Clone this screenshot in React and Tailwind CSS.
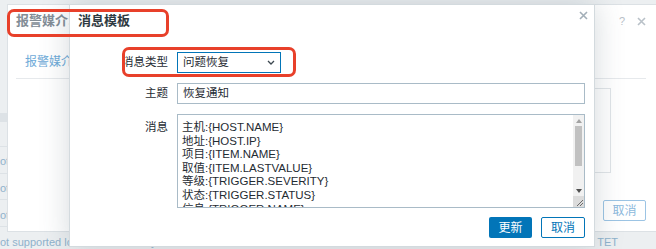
import React from 'react';

const messageLines = [
  '主机:{HOST.NAME}',
  '地址:{HOST.IP}',
  '项目:{ITEM.NAME}',
  '取值:{ITEM.LASTVALUE}',
  '等级:{TRIGGER.SEVERITY}',
  '状态:{TRIGGER.STATUS}',
  '信息:{TRIGGER.NAME}',
];

const CloseIcon = ({ className }) => (
  <svg width="9" height="9" viewBox="0 0 9 9" className={className}>
    <path d="M1 1L8 8M8 1L1 8" stroke="currentColor" strokeWidth="1.6" />
  </svg>
);

const Chevron = () => (
  <svg width="8" height="5" viewBox="0 0 8 5" className="text-[#3d4850]">
    <path d="M1 1L4 4L7 1" stroke="currentColor" strokeWidth="1.3" fill="none" />
  </svg>
);

const Scrollbar = () => (
  <div className="w-[11px] bg-[#f1f1f1] flex flex-col">
    <div className="h-[11px] flex items-center justify-center">
      <svg width="6" height="4" viewBox="0 0 6 4"><path d="M0 4L3 0L6 4Z" fill="#a3a3a3" /></svg>
    </div>
    <div className="h-[40px] mx-[2px] bg-[#c1c1c1]" />
    <div className="flex-1" />
    <div className="h-[11px] flex items-center justify-center">
      <svg width="6" height="4" viewBox="0 0 6 4"><path d="M0 0L6 0L3 4Z" fill="#505050" /></svg>
    </div>
    <div className="h-[11px] bg-[#dcdcdc] flex items-end justify-end">
      <svg width="9" height="9" viewBox="0 0 9 9">
        <path d="M2 8L8 2M5 8L8 5" stroke="#6b6b6b" strokeWidth="1" />
      </svg>
    </div>
  </div>
);

// page underneath both dialogs
const BackgroundPage = () => (
  <div className="w-[656px] h-[249px] bg-[#eceff1] flex flex-col pt-[113px] text-[11px] text-[#8fb2cc]">
    <div className="h-[10px] bg-[#dde2e6]" />
    <div className="h-[26px] border-b border-[#dde2e6]" />
    {[0, 1, 2].map((i) => (
      <div key={i} className="h-[28px] border-b border-[#dde2e6] flex items-center pt-[4px] leading-none">ot</div>
    ))}
    <div className="flex pt-[9px] leading-[13px] whitespace-nowrap">
      <span>ot supported low-level discovery rules and items were found on hosts</span>
      <span className="ml-auto mr-[38px]">TET</span>
    </div>
  </div>
);

const MediaDialog = () => (
  <div className="absolute left-[7px] top-[4px] w-[652px] h-[228px] bg-white border border-[#dce1e5] flex flex-col pl-[8px] pr-[12px] pt-[8px]">
    <div className="flex items-center justify-between h-[16px]">
      <h2 className="text-[13px] leading-[16px] font-bold text-[#838d96]">报警媒介:</h2>
      <div className="flex items-center gap-[12px] text-[#b9c1c8]">
        <span className="text-[11px] leading-none">?</span>
        <CloseIcon />
      </div>
    </div>
    <div className="h-[34px] mt-[16px] border-b border-[#e6e9ec] flex items-center pl-[9px] text-[12px] text-[#6eaad8]">
      报警媒介
    </div>
    <div className="flex justify-end mt-[9px]">
      <div className="w-[200px] h-[85px] border border-[#e1e5e8] mr-[35px]" />
    </div>
    <div className="flex justify-end mt-[27px]">
      <button className="w-[43px] h-[21px] border border-[#9cc4e4] rounded-[2px] text-[12px] text-[#8cb8dc] bg-white">取消</button>
    </div>
  </div>
);

const TemplateDialog = () => (
  <div className="absolute left-[69px] top-[4px] w-[526px] h-[243px] bg-white border border-[#d3dade] shadow-[0_0_28px_rgba(60,80,95,0.22)] flex flex-col pl-[10px] pr-[9px] pt-[8px]">
    <div className="flex items-start justify-between h-[16px]">
      <h2 className="text-[13px] leading-[16px] font-bold text-[#2f3a42] ml-[-2px]">消息模板</h2>
      <CloseIcon className="text-[#a3afb8] mt-[-2px] mr-[-3px]" />
    </div>

    <div className="grid grid-cols-[88px_1fr] gap-x-[9px] gap-y-[10px] mt-[23px] text-[11.5px] text-[#1f2c33]">
      <label className="text-right leading-[21px]">消息类型</label>
      <div className="w-[104px] h-[21px] border border-[#0275b8] flex items-center justify-between pl-[5px] pr-[5px]">
        <span>问题恢复</span>
        <Chevron />
      </div>

      <label className="text-right leading-[21px]">主题</label>
      <div className="h-[21px] border border-[#a9bbc7] flex items-center pl-[5px]">恢复通知</div>

      <label className="text-right leading-[16px] pt-[5px]">消息</label>
      <div className="h-[94px] border border-[#a9bbc7] flex">
        <div className="flex-1 overflow-hidden pl-[4px] pt-[6px] text-[11.5px] leading-[13.6px] whitespace-nowrap">
          {messageLines.map((line) => (
            <div key={line}>{line}</div>
          ))}
        </div>
        <Scrollbar />
      </div>
    </div>

    <div className="flex justify-end gap-[9px] mt-[9px]">
      <button className="w-[43px] h-[21px] rounded-[2px] bg-[#0275b8] text-white text-[12px]">更新</button>
      <button className="w-[44px] h-[21px] rounded-[2px] border border-[#0275b8] text-[#0275b8] bg-white text-[12px]">取消</button>
    </div>
  </div>
);

export default function App() {
  return (
    <div className="relative w-[656px] h-[249px] overflow-hidden font-['Liberation_Sans','Noto_Sans_CJK_SC',sans-serif]">
      <BackgroundPage />
      <MediaDialog />
      <TemplateDialog />
      {/* red annotation marks */}
      <div className="absolute left-[7px] top-[9px] w-[162px] h-[28px] border-[3px] border-[#e8402a] rounded-[7px]" />
      <div className="absolute left-[122px] top-[47px] w-[174px] h-[30px] border-[3px] border-[#e8402a] rounded-[7px]" />
    </div>
  );
}
